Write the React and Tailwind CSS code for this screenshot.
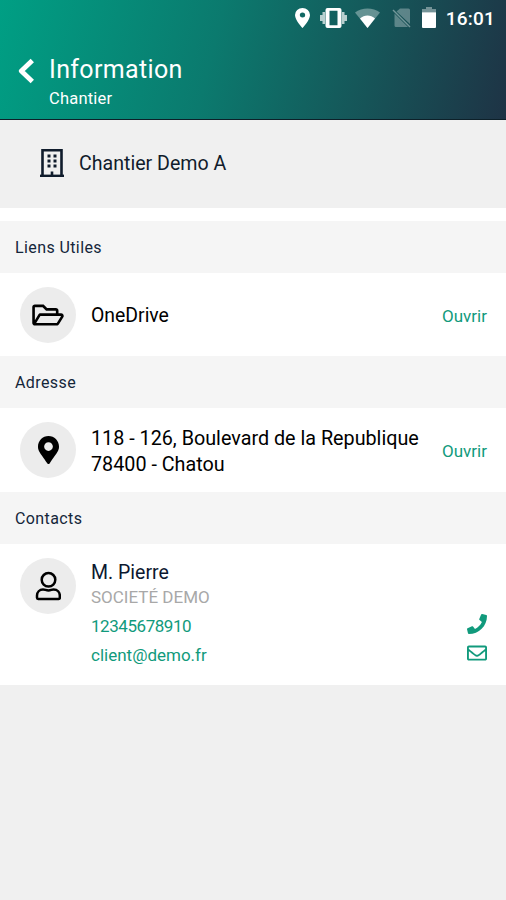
import React from 'react';
import {
  FaRegFolderOpen,
  FaMapMarkerAlt,
  FaPhone,
  FaRegEnvelope
} from 'react-icons/fa';

const StatusBar = () => (
  <div className="flex h-9 items-center justify-end pr-[11px] pb-px text-white">
    <svg className="mr-[10px] h-5 w-[15px]" viewBox="0 0 14 20" preserveAspectRatio="none" fill="currentColor">
      <path fillRule="evenodd" d="M7 0a7 7 0 0 0-7 7c0 5.200 7 13 7 13s7-7.800 7-13a7 7 0 0 0-7-7zm0 4.500a2.500 2.500 0 1 1 0 5 2.500 2.500 0 0 1 0-5z" />
    </svg>
    <svg className="mr-[8px] h-5 w-[27px]" viewBox="0 0 27 20" fill="currentColor">
      <path fillRule="evenodd" d="M7.500 0h12A2 2 0 0 1 21.500 2v16a2 2 0 0 1-2 2h-12a2 2 0 0 1-2-2V2a2 2 0 0 1 2-2zM9.500 2.800v14.400h8V2.800z" />
      <path d="M2.500 4H5v12H2.500zM22 4h2.500v12H22zM0 7h2.500v6H0zM24.500 7H27v6h-2.500z" opacity=".7" />
    </svg>
    <svg className="mr-[12px] h-5 w-[25px]" viewBox="0 0 25 20" fill="currentColor">
      <path d="M12.500 20 0 4.500C7 -.8 18 -.8 25 4.500z" opacity=".35" />
      <path d="M12.500 20 5 10.500c4.300-4 10.700-4 15 0z" />
    </svg>
    <svg className="mr-[11px] h-5 w-[19px]" viewBox="0 0 19 20" fill="none">
      <path d="M8 0.500h8.500A1.500 1.500 0 0 1 18 2v14L4.500 3.500zM2.500 5.500 16 19H4a1.500 1.500 0 0 1-1.500-1.500z" fill="currentColor" opacity=".3" />
      <path d="m1 2 17 17" stroke="currentColor" strokeWidth="1.500" opacity=".4" />
    </svg>
    <svg className="mr-[10px] h-[21px] w-[14px]" viewBox="0 0 14 20" preserveAspectRatio="none" fill="currentColor">
      <path d="M4 0h6v2h4v3H0V2h4z" opacity=".4" />
      <path d="M0 5h14v14a1 1 0 0 1-1 1H1a1 1 0 0 1-1-1z" />
    </svg>
    <span className="pt-px text-[19px] leading-none font-medium tracking-[0.2px]">16:01</span>
  </div>
);

const BackIcon = () => (
  <svg className="h-[26px] w-[17px]" viewBox="0 0 17 26" fill="none" stroke="currentColor" strokeWidth="4.800" strokeLinejoin="round">
    <path d="M14.300 2.500 3.300 13l11 10.500" />
  </svg>
);

const BuildingIcon = () => (
  <svg className="h-[30px] w-[26px]" viewBox="0 0 26 30" fill="none" stroke="currentColor">
    <path d="M3.500 28V2.200h19V28" strokeWidth="2.600" />
    <path d="M1 27.800h24" strokeWidth="2.400" />
    <path d="M13 23.500V28" strokeWidth="2.600" />
    <path d="M8.500 8h3M14.500 8h3M8.500 13h3M14.500 13h3M8.500 18h3M14.500 18h3" strokeWidth="3" />
  </svg>
);

const UserIcon = () => (
  <svg className="h-[30px] w-[26px]" viewBox="0 0 26 30" fill="none" stroke="currentColor" strokeWidth="2.500">
    <circle cx="13.500" cy="8.800" r="6.800" />
    <path d="M8 18.500c2 0 3 .9 5.500 .9s3-.9 5-.9c4 0 6.300 2.700 6.300 6v2.300c0 .8-.5 1.200-1.200 1.200H3.200c-.7 0-1.200-.4-1.200-1.200v-2.300c0-3.300 2.500-6 6-6z" />
  </svg>
);

const SectionTitle = ({ children }) => (
  <h2 className="flex h-[52px] items-center bg-[#f5f5f5] px-[15px] pt-[2px] text-[16px] tracking-[0.4px] text-[#14263a]">
    {children}
  </h2>
);

const RoundIcon = ({ children }) => (
  <div className="flex h-14 w-14 shrink-0 items-center justify-center rounded-full bg-[#ececec] text-black">
    {children}
  </div>
);

const App = () => {
  return (
    <div className="min-h-[900px] w-[506px] bg-[#f0f0f0] font-['Roboto',sans-serif]">

      {/* Header */}
      <header className="h-[120px] border-b border-[#0d2029] bg-[linear-gradient(104deg,#009f84_0%,#0b7a6e_42%,#15585a_70%,#1e3345_100%)] text-white">
        <StatusBar />
        <div className="flex pt-[18px] pl-[18px]">
          <div className="mt-[4px]">
            <BackIcon />
          </div>
          <div className="ml-[14px]">
            <h1 className="text-[25px] leading-8 tracking-[0.35px]">Information</h1>
            <p className="pt-px text-[16.5px] leading-6 tracking-[0.2px]">Chantier</p>
          </div>
        </div>
      </header>

      {/* Site name */}
      <div className="flex h-[88px] items-center gap-[14px] pb-[3px] pl-[39px] text-[#101c2c]">
        <BuildingIcon />
        <span className="pt-[2px] text-[19.6px]">Chantier Demo A</span>
      </div>
      <div className="h-[13px] bg-white" />

      <SectionTitle>Liens Utiles</SectionTitle>
      <div className="flex h-[83px] items-center bg-white pr-[19px] pl-5">
        <RoundIcon>
          <FaRegFolderOpen className="h-7 w-8" />
        </RoundIcon>
        <span className="ml-[15px] flex-1 pt-[3px] text-[19.4px]">OneDrive</span>
        <span className="pt-[4px] text-[17px] text-[#119a7c]">Ouvrir</span>
      </div>

      <SectionTitle>Adresse</SectionTitle>
      <div className="flex h-[84px] items-center bg-white pr-[19px] pl-5">
        <RoundIcon>
          <FaMapMarkerAlt className="h-7 w-[21px]" />
        </RoundIcon>
        <p className="ml-[15px] flex-1 pt-[3px] text-[19.75px] leading-[26px] whitespace-nowrap">
          118 - 126, Boulevard de la Republique
          <br />
          78400 - Chatou
        </p>
        <span className="pt-[4px] text-[17px] text-[#119a7c]">Ouvrir</span>
      </div>

      <SectionTitle>Contacts</SectionTitle>
      <div className="flex h-[141px] bg-white pt-[14px] pr-[19px] pl-5">
        <RoundIcon>
          <UserIcon />
        </RoundIcon>
        <div className="ml-[15px] flex-1">
          <p className="pt-px text-[19.5px] leading-7 text-[#0c1830]">M. Pierre</p>
          <p className="text-[17px] leading-[21px] text-[#a8a8a8]">SOCIETÉ DEMO</p>
          <div className="flex h-[29px] justify-between text-[17px] leading-[36px] text-[#119a7c]">
            <span className="tracking-[-0.45px]">12345678910</span>
            <FaPhone className="mt-[6px] h-5 w-5" />
          </div>
          <div className="flex h-[29px] justify-between text-[17px] leading-[36px] text-[#119a7c]">
            <span>client@demo.fr</span>
            <FaRegEnvelope className="mt-[6px] h-5 w-5" />
          </div>
        </div>
      </div>

    </div>
  );
};

export default App;
